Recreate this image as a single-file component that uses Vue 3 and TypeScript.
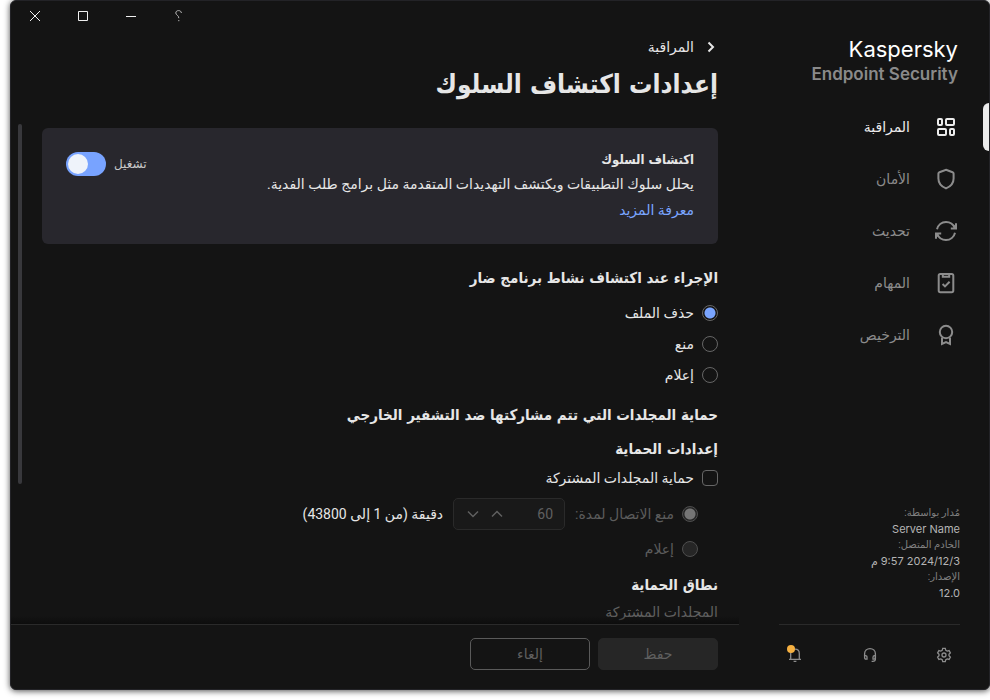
<script setup lang="ts">
import { ref } from 'vue'

interface NavItem {
  id: string
  label: string
}

const navItems: NavItem[] = [
  { id: 'monitor', label: 'المراقبة' },
  { id: 'security', label: 'الأمان' },
  { id: 'update', label: 'تحديث' },
  { id: 'tasks', label: 'المهام' },
  { id: 'license', label: 'الترخيص' },
]
const activeNav = ref('monitor')

const info = [
  { term: 'مُدار بواسطة:', value: 'Server Name' },
  { term: 'الخادم المتصل:', value: '2024/12/3 9:57 م' },
  { term: 'الإصدار:', value: '12.0' },
]

const actions = [
  { id: 'delete', label: 'حذف الملف' },
  { id: 'block', label: 'منع' },
  { id: 'notify', label: 'إعلام' },
]
const action = ref('delete')
const enabled = ref(true)
const protectShared = ref(false)
const sharedAction = ref('block')
const minutes = ref('60')
</script>

<template>
  <div class="window" dir="rtl">
    <aside class="sidebar">
      <div class="brand">
        <div class="brand-name">Kaspersky</div>
        <div class="brand-product">Endpoint Security</div>
      </div>

      <nav class="nav">
        <a
          v-for="item in navItems"
          :key="item.id"
          href="#"
          class="nav-item"
          :class="{ active: item.id === activeNav }"
          @click.prevent="activeNav = item.id"
        >
          <svg class="nav-icon" viewBox="0 0 24 24" aria-hidden="true">
            <template v-if="item.id === 'monitor'">
              <rect x="4" y="4" width="4" height="6" rx="1" />
              <rect x="12" y="4" width="8" height="6" rx="1" />
              <rect x="4" y="14" width="8" height="6" rx="1" />
              <rect x="16" y="14" width="4" height="6" rx="1" />
            </template>
            <path
              v-else-if="item.id === 'security'"
              d="M12 2.8 L18.6 5.2 Q19.6 5.6 19.6 6.6 V11.5 C19.6 16.5 16.5 19.6 12 21.4 C7.5 19.6 4.4 16.5 4.4 11.5 V6.6 Q4.4 5.6 5.4 5.2 Z"
            />
            <template v-else-if="item.id === 'update'">
              <path d="M3 10.3 C4 5.8 7.7 2.9 12 2.9 C16 2.9 19.3 5.2 20.8 8.8" />
              <path d="M22 4.2 V9.4 H16.8 M19.6 6.6 L21 8.4" />
              <path d="M21 13.7 C20 18.2 16.3 21.1 12 21.1 C8 21.1 4.7 18.8 3.2 15.2" />
              <path d="M2 19.8 V14.6 H7.2 M4.4 17.4 L3 15.6" />
            </template>
            <template v-else-if="item.id === 'tasks'">
              <rect x="4.7" y="3" width="14.6" height="18.2" rx="1.6" />
              <path d="M8.8 3.5 V5.8 H15.2 V3.5" />
              <path d="M8.6 13 L11 15.4 L15.6 10.8" />
            </template>
            <template v-else>
              <circle cx="12" cy="9" r="6.2" />
              <path d="M8 14.5 V21 L12 19.2 L16 21 V14.5" />
            </template>
          </svg>
          <span>{{ item.label }}</span>
        </a>
      </nav>

      <dl class="info">
        <template v-for="row in info" :key="row.term">
          <dt>{{ row.term }}</dt>
          <dd>{{ row.value }}</dd>
        </template>
      </dl>

      <div class="tools">
        <button type="button" class="tool" aria-label="الإعدادات">
          <svg viewBox="0 0 16 16" aria-hidden="true">
            <path
              d="M6.7 1.4 H9.3 L9.8 3.3 L11.2 4.1 L13.1 3.6 L14.4 5.8 L13 7.2 V8.8 L14.4 10.2 L13.1 12.4 L11.2 11.9 L9.8 12.7 L9.3 14.6 H6.7 L6.2 12.7 L4.8 11.9 L2.9 12.4 L1.6 10.2 L3 8.8 V7.2 L1.6 5.8 L2.9 3.6 L4.8 4.1 L6.2 3.3 Z"
            />
            <circle cx="8" cy="8" r="2" />
          </svg>
        </button>
        <button type="button" class="tool" aria-label="الدعم">
          <svg viewBox="0 0 16 16" aria-hidden="true">
            <path d="M2.6 9 V6.8 C2.6 3.8 5 1.6 8 1.6 C11 1.6 13.4 3.8 13.4 6.8 V12 C13.4 13.6 12.4 14.4 10.8 14.4 H9.6" />
            <path d="M2.6 8.6 H3.4 Q5 8.6 5 10.2 V12.2 H4 Q2.6 12.2 2.6 10.8 Z" />
            <path d="M13.4 8.6 H12.6 Q11 8.6 11 10.2 V12.2 H12 Q13.4 12.2 13.4 10.8 Z" />
          </svg>
        </button>
        <button type="button" class="tool" aria-label="الإشعارات">
          <svg viewBox="0 0 16 16" aria-hidden="true">
            <path d="M2 12.4 H14 M3.7 12.2 V6.4 C3.7 3.8 5.6 2.2 8 2.2 C10.4 2.2 12.3 3.8 12.3 6.4 V12.2 M6.6 14.4 H9.4" />
          </svg>
          <span class="dot"></span>
        </button>
      </div>
    </aside>

    <main class="main">
      <div class="titlebar">
        <button type="button" class="win-btn help" aria-label="تعليمات">
          <svg viewBox="0 0 12 12" aria-hidden="true">
            <path d="M8.4 3 C8.2 1.4 7.2 0.6 5.6 0.6 C3.8 0.6 2.8 1.6 2.8 3 C2.8 5.2 5.8 5 5.8 8.2 M5.8 10 V11.2" />
          </svg>
        </button>
        <button type="button" class="win-btn" aria-label="تصغير">
          <svg viewBox="0 0 12 12" aria-hidden="true"><path d="M1 6.5 H11" /></svg>
        </button>
        <button type="button" class="win-btn" aria-label="تكبير">
          <svg viewBox="0 0 12 12" aria-hidden="true"><path d="M1.5 1.5 H10.5 V10.5 H1.5 Z" /></svg>
        </button>
        <button type="button" class="win-btn" aria-label="إغلاق">
          <svg viewBox="0 0 12 12" aria-hidden="true"><path d="M1 1 L11 11 M11 1 L1 11" /></svg>
        </button>
      </div>

      <header class="header">
        <a href="#" class="crumb" @click.prevent>
          <svg viewBox="0 0 14 14" aria-hidden="true"><path d="M4.5 2.5 L9 7 L4.5 11.5" /></svg>
          <span>المراقبة</span>
        </a>
        <h1>إعدادات اكتشاف السلوك</h1>
      </header>

      <div class="body">
        <div class="content">
          <section class="card">
            <div class="card-text">
              <h2>اكتشاف السلوك</h2>
              <p>يحلل سلوك التطبيقات ويكتشف التهديدات المتقدمة مثل برامج طلب الفدية.</p>
              <a href="#" @click.prevent>معرفة المزيد</a>
            </div>
            <label class="switch">
              <span>تشغيل</span>
              <input v-model="enabled" type="checkbox" role="switch" />
            </label>
          </section>

          <h2 class="group-title">الإجراء عند اكتشاف نشاط برنامج ضار</h2>
          <div class="options">
            <label v-for="a in actions" :key="a.id" class="option">
              <input v-model="action" type="radio" name="action" :value="a.id" />
              <span>{{ a.label }}</span>
            </label>
          </div>

          <h2 class="group-title shared">حماية المجلدات التي تتم مشاركتها ضد التشفير الخارجي</h2>
          <h3>إعدادات الحماية</h3>
          <label class="option">
            <input v-model="protectShared" type="checkbox" />
            <span>حماية المجلدات المشتركة</span>
          </label>

          <div class="nested">
            <div class="duration">
              <label class="option disabled">
                <input v-model="sharedAction" type="radio" name="shared" value="block" disabled />
                <span>منع الاتصال لمدة:</span>
              </label>
              <div class="spinner">
                <input v-model="minutes" type="text" inputmode="numeric" aria-label="المدة بالدقائق" disabled />
                <button type="button" aria-label="زيادة" disabled>
                  <svg viewBox="0 0 12 12" aria-hidden="true"><path d="M1 8.5 L6 3.5 L11 8.5" /></svg>
                </button>
                <button type="button" aria-label="إنقاص" disabled>
                  <svg viewBox="0 0 12 12" aria-hidden="true"><path d="M1 3.5 L6 8.5 L11 3.5" /></svg>
                </button>
              </div>
              <span class="unit">دقيقة (من 1 إلى 43800)</span>
            </div>
            <label class="option disabled">
              <input v-model="sharedAction" type="radio" name="shared" value="notify" disabled />
              <span>إعلام</span>
            </label>
          </div>

          <h3 class="scope">نطاق الحماية</h3>
          <p class="scope-text">المجلدات المشتركة</p>
        </div>
        <div class="scrollbar"><div class="thumb"></div></div>
      </div>

      <footer class="footer">
        <button type="button" class="btn primary" disabled>حفظ</button>
        <button type="button" class="btn" disabled>إلغاء</button>
      </footer>
    </main>
  </div>
</template>

<style>
body {
  background: #fff;
}
</style>

<style scoped>
* {
  box-sizing: border-box;
}
h1,
h2,
h3,
p,
dl,
dd {
  margin: 0;
}
button,
input {
  font: inherit;
  color: inherit;
  margin: 0;
}
button {
  padding: 0;
  border: 0;
  background: none;
}
a {
  text-decoration: none;
}
svg {
  display: block;
  fill: none;
  stroke: currentColor;
}
.window {
  display: flex;
  height: calc(100vh - 10px);
  margin: 0 0 10px 10px;
  background: #141414;
  border: 1px solid #232327;
  border-radius: 6px;
  box-shadow: 0 1px 6px rgba(0, 0, 0, 0.7);
  overflow: hidden;
  color: #e6e6e6;
  font-family: Roboto, 'Noto Sans', 'DejaVu Sans', sans-serif;
  font-size: 14px;
  line-height: 24px;
}

/* sidebar */
.sidebar {
  flex: 0 0 250px;
  display: flex;
  flex-direction: column;
  padding: 35px 0 22px;
}
.brand {
  direction: ltr;
  text-align: right;
  padding-right: 31px;
  font-family: 'Inter', 'Liberation Sans', sans-serif;
}
.brand-name {
  font-size: 22px;
  line-height: 26px;
  color: #fff;
}
.brand-product {
  font-size: 17px;
  font-weight: 600;
  line-height: 24px;
  color: #8a8a8a;
}
.nav {
  display: flex;
  flex-direction: column;
  gap: 4px;
  padding-top: 17px;
}
.nav-item {
  position: relative;
  display: flex;
  align-items: center;
  gap: 24px;
  height: 48px;
  padding-right: 31px;
  color: #8c8c8c;
}
.nav-item.active {
  color: #ececec;
}
.nav-item.active::before {
  content: '';
  position: absolute;
  top: 0;
  right: 0;
  width: 6px;
  height: 48px;
  border-radius: 6px 0 0 6px;
  background: #ececec;
}
.nav-icon {
  width: 24px;
  height: 24px;
  stroke-width: 2;
}
.info {
  margin-top: auto;
  padding: 0 29px 23px 0;
  font-size: 11px;
  line-height: 16px;
}
.info dt {
  font-size: 10px;
  color: #808080;
}
.info dd {
  font-family: Inter, 'DejaVu Sans', sans-serif;
  color: #b4b4b4;
}
.tools {
  display: flex;
  justify-content: space-between;
  margin: 0 29px 0 40px;
  padding-top: 18px;
  border-top: 1px solid #2a2a2a;
  color: #8c8c8c;
}
.tool {
  position: relative;
  width: 32px;
  height: 24px;
  display: flex;
  align-items: center;
  justify-content: center;
}
.tool svg {
  width: 16px;
  height: 16px;
  stroke-width: 1.3;
}
.dot {
  position: absolute;
  top: 2px;
  left: 8px;
  width: 8px;
  height: 8px;
  border-radius: 50%;
  background: #f5b041;
}

/* main column */
.main {
  flex: 1;
  min-width: 0;
  display: flex;
  flex-direction: column;
}
.titlebar {
  display: flex;
  justify-content: flex-end;
}
.win-btn {
  width: 48px;
  height: 30px;
  display: flex;
  align-items: center;
  justify-content: center;
  color: #f0f0f0;
}
.win-btn svg {
  width: 12px;
  height: 12px;
}
.win-btn.help {
  color: #b8b8b8;
}
.header {
  padding: 4px 21px 12px 31px;
}
.crumb {
  display: flex;
  align-items: center;
  gap: 10px;
  color: #e6e6e6;
}
.crumb svg {
  width: 14px;
  height: 14px;
  stroke-width: 2;
}
h1,
h2,
h3 {
  font-family: 'DejaVu Sans Condensed', 'DejaVu Sans', sans-serif;
  font-weight: 700;
}
h1 {
  margin-top: 5px;
  font-size: 26px;
  line-height: 40px;
}
.body {
  position: relative;
  flex: 1;
  min-height: 0;
  display: flex;
  overflow: hidden;
}
.body::after {
  content: '';
  position: absolute;
  right: 0;
  bottom: 0;
  left: 0;
  height: 8px;
  background: linear-gradient(rgba(12, 12, 12, 0), rgba(12, 12, 12, 0.9));
}
.content {
  flex: 1;
  min-width: 0;
  padding: 12px 21px 0 20px;
}
.scrollbar {
  flex: 0 0 4px;
  margin-left: 7px;
  padding-top: 8px;
}
.thumb {
  height: 72%;
  border-radius: 2px;
  background: #38383c;
}
.card {
  display: flex;
  justify-content: space-between;
  align-items: flex-start;
  padding: 20px 24px 22px;
  border-radius: 6px;
  background: #28272d;
}
.card h2 {
  font-size: 13px;
  line-height: 24px;
}
.card p {
  line-height: 24px;
}
.card a {
  display: block;
  margin-top: 2px;
  color: #7aa5ff;
}
.switch {
  display: flex;
  align-items: center;
  gap: 8px;
  margin-top: 4px;
  font-size: 12px;
  color: #c8c8c8;
}
.switch input {
  appearance: none;
  width: 40px;
  height: 24px;
  padding: 2px;
  border-radius: 12px;
  background: #505058;
  display: flex;
  justify-content: flex-start;
}
.switch input:checked {
  background: #78a3ff;
  justify-content: flex-end;
}
.switch input::before {
  content: '';
  width: 20px;
  height: 20px;
  border-radius: 50%;
  background: #eff3fa;
}
.group-title,
h3 {
  font-size: 15px;
  line-height: 24px;
}
.group-title {
  margin-top: 22px;
}
.group-title.shared {
  margin-top: 16px;
}
h3 {
  margin: 10px 0 5px;
}
.options {
  display: flex;
  flex-direction: column;
  gap: 7px;
  margin-top: 11px;
}
.option {
  display: flex;
  align-items: center;
  gap: 8px;
}
.option input {
  appearance: none;
  flex: none;
  width: 16px;
  height: 16px;
  border: 1px solid #666;
  border-radius: 50%;
}
.option input[type='checkbox'] {
  border-radius: 4px;
}
.option input[type='radio']:checked {
  background: radial-gradient(circle, #7aa5ff 5px, transparent 6px);
}
.option.disabled {
  color: #5c5c5c;
}
.option.disabled input {
  border-color: #4e4e4e;
  background: #262626;
}
.option.disabled input:checked {
  background: radial-gradient(circle, #757575 5px, #262626 6px);
}
.nested {
  display: flex;
  flex-direction: column;
  gap: 7px;
  padding: 8px 20px 0 0;
}
.duration {
  display: flex;
  align-items: center;
  gap: 10px;
}
.spinner {
  display: flex;
  align-items: center;
  width: 112px;
  height: 32px;
  padding: 0 11px 0 7px;
  border: 1px solid #2a2a2a;
  border-radius: 5px;
  background: #191919;
  color: #606060;
}
.spinner input {
  flex: 1;
  width: 0;
  padding: 0;
  border: 0;
  background: none;
  outline: 0;
}
.spinner button {
  width: 24px;
  height: 24px;
  display: flex;
  align-items: center;
  justify-content: center;
}
.spinner svg {
  width: 12px;
  height: 12px;
  stroke-width: 1.5;
}
.scope {
  margin: 12px 0 3px;
}
.scope-text {
  color: #606060;
}
.footer {
  display: flex;
  gap: 8px;
  padding: 13px 21px 19px;
  border-top: 1px solid #2a2a2a;
}
.btn {
  width: 120px;
  height: 32px;
  border: 1px solid #5a5a5a;
  border-radius: 5px;
  color: #606060;
}
.btn.primary {
  border-color: #262626;
  background: #262626;
}
</style>
